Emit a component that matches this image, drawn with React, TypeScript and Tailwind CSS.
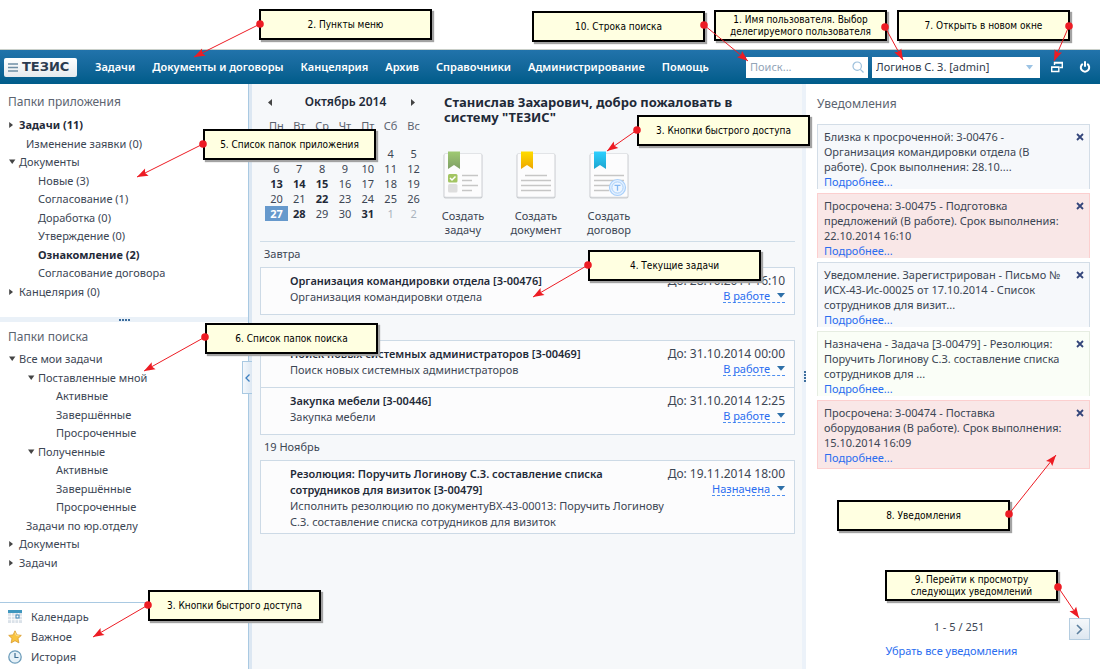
import type { ReactNode } from 'react';

/* ---------- folders ---------- */

type Folder = { label: string; pad: string; arrow?: 'open' | 'closed'; bold?: boolean };

const appFolders: Folder[] = [
  { label: 'Задачи (11)', pad: 'pl-[7px]', arrow: 'closed', bold: true },
  { label: 'Изменение заявки (0)', pad: 'pl-[26px]' },
  { label: 'Документы', pad: 'pl-[7px]', arrow: 'open' },
  { label: 'Новые (3)', pad: 'pl-[38px]' },
  { label: 'Согласование (1)', pad: 'pl-[38px]' },
  { label: 'Доработка (0)', pad: 'pl-[38px]' },
  { label: 'Утверждение (0)', pad: 'pl-[38px]' },
  { label: 'Ознакомление (2)', pad: 'pl-[38px]', bold: true },
  { label: 'Согласование договора', pad: 'pl-[38px]' },
  { label: 'Канцелярия (0)', pad: 'pl-[7px]', arrow: 'closed' },
];

const searchFolders: Folder[] = [
  { label: 'Все мои задачи', pad: 'pl-[7px]', arrow: 'open' },
  { label: 'Поставленные мной', pad: 'pl-[26px]', arrow: 'open' },
  { label: 'Активные', pad: 'pl-[56px]' },
  { label: 'Завершённые', pad: 'pl-[56px]' },
  { label: 'Просроченные', pad: 'pl-[56px]' },
  { label: 'Полученные', pad: 'pl-[26px]', arrow: 'open' },
  { label: 'Активные', pad: 'pl-[56px]' },
  { label: 'Завершённые', pad: 'pl-[56px]' },
  { label: 'Просроченные', pad: 'pl-[56px]' },
  { label: 'Задачи по юр.отделу', pad: 'pl-[26px]' },
  { label: 'Документы', pad: 'pl-[7px]', arrow: 'closed' },
  { label: 'Задачи', pad: 'pl-[7px]', arrow: 'closed' },
];

function TreeArrow({ state }: { state: 'open' | 'closed' }) {
  return (
    <svg className="w-3 h-2 shrink-0" viewBox="0 0 12 8" aria-hidden="true">
      {state === 'open' ? <path d="M2 1.5h6.4L5.2 6z" fill="#444" /> : <path d="M2.2 1v6L6 4z" fill="#444" />}
    </svg>
  );
}

function Tree({ folders, height }: { folders: Folder[]; height: string }) {
  return (
    <ul className={`flex flex-col ${height}`}>
      {folders.map((f, i) => (
        <li key={i} className={`flex flex-1 items-center ${f.pad}`}>
          {f.arrow && <TreeArrow state={f.arrow} />}
          <a href="#" className={f.bold ? 'font-bold text-[#1f2a38]' : ''}>{f.label}</a>
        </li>
      ))}
    </ul>
  );
}

function CalendarIcon() {
  return (
    <svg className="h-[14px] w-[14px]" viewBox="0 0 14 14" aria-hidden="true">
      <rect width="14" height="13" fill="#dbe2e9" />
      <rect width="14" height="3" fill="#3f97bf" />
      <path d="M0 6.3h14M0 9.7h14M3.5 3v10M7 3v10M10.500 3v10" stroke="#fff" strokeWidth=".8" />
      <rect x="8" y="5" width="3" height="3" fill="#fff" stroke="#3b84b5" />
    </svg>
  );
}

function StarIcon() {
  return (
    <svg className="h-[14px] w-[14px]" viewBox="0 0 14 14" aria-hidden="true">
      <path d="M7 .8l1.900 4.100 4.400.5-3.300 3 .9 4.500L7 10.700l-3.900 2.200.9-4.500-3.300-3 4.400-.5z" fill="#f9c440" stroke="#d99a2b" strokeWidth=".8" strokeLinejoin="round" />
      <path d="M7 2.500l1.300 3 3 .4" fill="none" stroke="#fde6a0" strokeWidth=".8" />
    </svg>
  );
}

function ClockIcon() {
  return (
    <svg className="h-[14px] w-[14px]" viewBox="0 0 14 14" aria-hidden="true">
      <circle cx="7" cy="7" r="6.200" fill="#e6f1f8" stroke="#6d9dbb" strokeWidth="1.300" />
      <path d="M7 3v4.500h3.500" fill="none" stroke="#3f6f93" strokeWidth="1.200" />
    </svg>
  );
}

const quickLinks: { label: string; icon: ReactNode }[] = [
  { label: 'Календарь', icon: <CalendarIcon /> },
  { label: 'Важное', icon: <StarIcon /> },
  { label: 'История', icon: <ClockIcon /> },
];

function Sidebar() {
  return (
    <aside className="flex w-[248px] shrink-0 flex-col bg-white">
      <section className="h-[233px] pt-1">
        <h2 className="flex h-7 items-center pl-2 text-[12px] text-[#5c6470]">Папки приложения</h2>
        <Tree folders={appFolders} height="h-[185px]" />
      </section>
      <div className="flex h-[5px] items-center justify-center gap-px bg-[#eaf1f8]">
        {[0, 1, 2, 3].map((i) => <span key={i} className="h-0.5 w-0.5 bg-[#3d6e9e]" />)}
      </div>
      <section className="flex-1">
        <h2 className="flex h-7 items-center pl-2 pt-0.5 text-[12px] text-[#5c6470]">Папки поиска</h2>
        <Tree folders={searchFolders} height="h-[222px]" />
      </section>
      <ul className="border-t border-[#a9c9e2] pt-1 pb-0.5">
        {quickLinks.map((q) => (
          <li key={q.label}>
            <a href="#" className="flex h-5 items-center gap-[9px] pl-2">
              {q.icon}
              {q.label}
            </a>
          </li>
        ))}
      </ul>
    </aside>
  );
}

/* ---------- header ---------- */

const menu = ['Задачи', 'Документы и договоры', 'Канцелярия', 'Архив', 'Справочники', 'Администрирование', 'Помощь'];

function Header() {
  return (
    <header className="flex h-[35px] items-center border-t border-[#c9cfc9] bg-linear-to-b from-[#2173ab] to-[#005c8a] pl-1 pr-[9px]">
      <a href="#" className="flex h-[19px] w-[73px] items-center gap-1 rounded-xs bg-linear-to-b from-white to-[#e6eaee] pl-1 font-['DejaVu_Sans',sans-serif] text-[13px] font-bold text-[#2b3a4f]">
        <svg className="h-[9px] w-[10px]" viewBox="0 0 10 9" aria-hidden="true">
          <path d="M0 1h10M0 4.500h10M0 8h10" stroke="#6f8ea5" strokeWidth="1.300" />
        </svg>
        ТЕЗИС
      </a>
      <nav className="ml-[18px] flex gap-[17px] text-[11px] font-semibold whitespace-nowrap text-white">
        {menu.map((m) => <a key={m} href="#">{m}</a>)}
      </nav>
      <div className="ml-auto flex items-center">
        <label className="flex h-[21px] w-[122px] items-center bg-white pr-1 pl-1">
          <input type="search" aria-label="Поиск" placeholder="Поиск..." className="w-0 min-w-0 flex-1 text-[11px] outline-none placeholder:text-[#93a5b8]" />
          <svg className="h-3 w-3" viewBox="0 0 12 12" fill="none" stroke="#9dc0dc" strokeWidth="1.200" aria-hidden="true">
            <circle cx="5.200" cy="5.200" r="4.200" />
            <path d="M8.300 8.300L11.500 11.500" />
          </svg>
        </label>
        <div className="relative ml-1 h-[21px] w-[168px]">
          <select aria-label="Пользователь" className="h-full w-full appearance-none bg-white pl-1 text-[11px] text-[#2f3b4c]">
            <option>Логинов С. З. [admin]</option>
          </select>
          <svg className="pointer-events-none absolute top-2 right-[7px] h-[5px] w-[7px]" viewBox="0 0 7 5" aria-hidden="true">
            <path d="M0 0h7L3.500 4.500z" fill="#9cc3e4" />
          </svg>
        </div>
        <button type="button" aria-label="Открыть в новом окне" className="ml-[11px]">
          <svg className="h-3 w-3" viewBox="0 0 12 12" fill="none" stroke="#fff" aria-hidden="true">
            <path d="M3.500 4V1.500h7.800v5H8.500M3 2h9" strokeWidth="1.400" />
            <path d="M.7 6h7.100v4.500H.7zM.2 6.400h8" strokeWidth="1.400" />
          </svg>
        </button>
        <button type="button" aria-label="Выход" className="ml-4">
          <svg className="h-3 w-3" viewBox="0 0 12 12" fill="none" stroke="#fff" strokeWidth="2" aria-hidden="true">
            <path d="M3.800 2.900a4.200 4.200 0 1 0 4.400 0M6 .3v5.500" />
          </svg>
        </button>
      </div>
    </header>
  );
}

/* ---------- calendar ---------- */

const weekdays = ['Пн', 'Вт', 'Ср', 'Чт', 'Пт', 'Сб', 'Вс'];
const weeks: (number | null)[][] = [
  [null, null, null, null, null, 4, 5],
  [6, 7, 8, 9, 10, 11, 12],
  [13, 14, 15, 16, 17, 18, 19],
  [20, 21, 22, 23, 24, 25, 26],
  [27, 28, 29, 30, 31, 1, 2],
];
const busyDays = [13, 14, 15, 22, 28, 31];

function dayClass(day: number | null, week: number) {
  if (day === null) return '';
  if (day === 27) return 'bg-[#6699cc] font-bold text-white';
  if (week === 4 && day < 7) return 'text-[#aab3bd]';
  return busyDays.includes(day) ? 'font-bold text-[#1f2a38]' : '';
}

function Calendar() {
  return (
    <section className="w-[160px] shrink-0">
      <div className="flex h-7 items-center pr-[10px] pl-[3px]">
        <button type="button" aria-label="Предыдущий месяц">
          <svg className="h-[7px] w-1" viewBox="0 0 4 7"><path d="M4 0v7L0 3.500z" fill="#444" /></svg>
        </button>
        <h2 className="flex-1 pl-2 text-center text-[12px] font-semibold text-[#1f2a38]">Октябрь 2014</h2>
        <button type="button" aria-label="Следующий месяц">
          <svg className="h-[7px] w-1" viewBox="0 0 4 7"><path d="M0 0v7L4 3.500z" fill="#444" /></svg>
        </button>
      </div>
      <table className="w-full table-fixed text-center text-[11px] leading-[15px]">
        <thead>
          <tr className="h-[30px] align-top">
            {weekdays.map((d) => <th key={d} scope="col" className="pt-0.5 font-normal text-[#5c6470]">{d}</th>)}
          </tr>
        </thead>
        <tbody>
          {weeks.map((w, i) => (
            <tr key={i} className="h-[15px]">
              {w.map((d, j) => <td key={j} className={dayClass(d, i)}>{d}</td>)}
            </tr>
          ))}
        </tbody>
      </table>
    </section>
  );
}

/* ---------- create buttons ---------- */

function DocIcon({ id, top, bottom, children }: { id: string; top: string; bottom: string; children: ReactNode }) {
  return (
    <svg className="h-12 w-10" viewBox="0 0 40 48" aria-hidden="true">
      <defs>
        <linearGradient id={id} x1="0" y1="0" x2="0" y2="1">
          <stop offset="0" stopColor={top} />
          <stop offset="1" stopColor={bottom} />
        </linearGradient>
      </defs>
      <rect x=".5" y="2.500" width="39" height="45" rx="2" fill="#c9ccd0" />
      <rect x="1.300" y="2.500" width="37.400" height="43.500" rx="1.500" fill="#fcfcfd" stroke="#dcdfe2" strokeWidth=".7" />
      <path d="M5 .5h12v17.500l-6-4-6 4z" fill={`url(#${id})`} />
      {children}
    </svg>
  );
}

const line = { stroke: '#c6c6c6', strokeWidth: 1.5, fill: 'none' };

const createActions: { verb: string; noun: string; icon: ReactNode }[] = [
  {
    verb: 'Создать',
    noun: 'задачу',
    icon: (
      <DocIcon id="ribbonGreen" top="#9fca72" bottom="#7f9f66">
        <rect x="5" y="23" width="9.500" height="8.500" rx="1.500" fill="#a3c563" />
        <path d="M7 27l2 2 3.500-3.500" fill="none" stroke="#fff" strokeWidth="1.500" />
        <rect x="5" y="33" width="9.500" height="8.500" rx="1.500" fill="#dedede" />
        <path d="M19 24.500h16M19 29.500h10M19 34.500h16M19 39.500h10" {...line} />
      </DocIcon>
    ),
  },
  {
    verb: 'Создать',
    noun: 'документ',
    icon: (
      <DocIcon id="ribbonYellow" top="#ffdc00" bottom="#eda600">
        <path d="M9 24.500h22M5 29.500h30M5 34.500h30M5 39.500h30" {...line} />
      </DocIcon>
    ),
  },
  {
    verb: 'Создать',
    noun: 'договор',
    icon: (
      <DocIcon id="ribbonBlue" top="#2fd0ff" bottom="#1ba4cf">
        <path d="M5 24.500h30M5 29.500h30M5 34.500h16M5 39.500h15" {...line} />
        <circle cx="28.500" cy="36.500" r="8" fill="#e3f0ff" stroke="#a9d0fb" strokeWidth="1.200" />
        <circle cx="28.500" cy="36.500" r="5.600" fill="#eef6ff" stroke="#a9d0fb" strokeWidth="1" />
        <path d="M25.500 34.300h6M28.500 34.300v5.500" stroke="#86b9f2" strokeWidth="1.300" />
      </DocIcon>
    ),
  },
];

/* ---------- tasks ---------- */

type Task = { title: string; text: string; due: string; status: string };

const tomorrow: Task[] = [
  { title: 'Организация командировки отдела [З-00476]', text: 'Организация командировки отдела', due: 'До: 28.10.2014 16:10', status: 'В работе' },
];
const october: Task[] = [
  { title: 'Поиск новых системных администраторов [З-00469]', text: 'Поиск новых системных администраторов', due: 'До: 31.10.2014 00:00', status: 'В работе' },
  { title: 'Закупка мебели [З-00446]', text: 'Закупка мебели', due: 'До: 31.10.2014 12:25', status: 'В работе' },
];
const november: Task[] = [
  {
    title: 'Резолюция: Поручить Логинову С.З. составление списка сотрудников для визиток [З-00479]',
    text: 'Исполнить резолюцию по документуВХ-43-00013: Поручить Логинову С.З. составление списка сотрудников для визиток',
    due: 'До: 19.11.2014 18:00',
    status: 'Назначена',
  },
];

function TaskList({ tasks }: { tasks: Task[] }) {
  return (
    <ul className="divide-y divide-[#cddae6] border border-[#cddae6] bg-[#fcfcfd]">
      {tasks.map((t) => (
        <li key={t.title} className="flex min-h-[46px] justify-between pt-[5px] pr-[9px] pb-[3px] pl-[29px] leading-4 not-last:min-h-[47px]">
          <div className="min-w-0 flex-1">
            <h3 className="max-w-[360px] font-semibold text-[#1f2a38]">{t.title}</h3>
            <p>{t.text}</p>
          </div>
          <div className="flex shrink-0 flex-col items-end">
            <span className="text-[12px]">{t.due}</span>
            <button type="button" className="flex h-[14px] items-center gap-[7px] border-b border-dashed border-[#4d8ef0] text-[11px] text-[#2a6df0]">
              {t.status}
              <svg className="h-[5px] w-2" viewBox="0 0 8 5" aria-hidden="true"><path d="M0 0h8L4 4.800z" fill="#2d6fa8" /></svg>
            </button>
          </div>
        </li>
      ))}
    </ul>
  );
}

function Workspace() {
  return (
    <main className="min-w-0 flex-1 bg-[#f6f8fa] pr-[7px] pl-2">
      <div className="flex h-[158px] border-b border-[#cfdde8] pt-1 pl-[5px]">
        <Calendar />
        <section className="ml-0.5 min-w-0 flex-1">
          <h1 className="max-w-[330px] pt-[7px] pl-[17px] text-[13px] leading-[15px] font-bold text-[#1f2a38]">
            Станислав Захарович, добро пожаловать в систему "ТЕЗИС"
          </h1>
          <div className="mt-[26px] flex gap-px">
            {createActions.map((a) => (
              <button key={a.noun} type="button" className="flex w-[72px] flex-col items-center gap-[10px] text-[11px] leading-[14px]">
                {a.icon}
                <span>{a.verb}<br />{a.noun}</span>
              </button>
            ))}
          </div>
        </section>
      </div>
      <h2 className="flex h-[25px] items-center pl-1">Завтра</h2>
      <TaskList tasks={tomorrow} />
      <div className="mt-[25px]">
        <TaskList tasks={october} />
      </div>
      <h2 className="flex h-[25px] items-center pl-1">19 Ноябрь</h2>
      <TaskList tasks={november} />
    </main>
  );
}

/* ---------- notifications ---------- */

type Notice = { text: string; look: string };

const plain = 'border-[#d3dde7] bg-[#f6f8fb]';
const overdue = 'border-[#fccfcf] bg-[#f9e7e7]';
const assigned = 'border-[#e6ede2] bg-[#fafef7]';

const notices: Notice[] = [
  { text: 'Близка к просроченной: З-00476 - Организация командировки отдела (В работе). Срок выполнения: 28.10....', look: plain },
  { text: 'Просрочена: З-00475 - Подготовка предложений (В работе). Срок выполнения: 22.10.2014 16:10', look: overdue },
  { text: 'Уведомление. Зарегистрирован - Письмо № ИСХ-43-Ис-00025 от 17.10.2014 - Список сотрудников для визит...', look: plain },
  { text: 'Назначена - Задача [З-00479] - Резолюция: Поручить Логинову С.З. составление списка сотрудников для ...', look: assigned },
  { text: 'Просрочена: З-00474 - Поставка оборудования (В работе). Срок выполнения: 15.10.2014 16:09', look: overdue },
];

function Notifications() {
  return (
    <aside className="flex w-[294px] shrink-0 flex-col bg-white pr-[10px] pl-[11px]">
      <h2 className="flex h-10 items-center text-[12px] text-[#5c6470]">Уведомления</h2>
      <ul className="flex flex-col gap-1">
        {notices.map((n) => (
          <li key={n.text} className={`flex justify-between border-x border-t pt-1 pr-[5px] pl-1.5 leading-[15px] last:border-b last:pb-[3px] ${n.look}`}>
            <div className="w-[240px]">
              <p>{n.text}</p>
              <a href="#" className="block text-[#2a6df0]">Подробнее...</a>
            </div>
            <button type="button" aria-label="Закрыть" className="mt-1 h-2">
              <svg className="h-2 w-2" viewBox="0 0 8 8" aria-hidden="true">
                <path d="M1 1l6 6M7 1L1 7" stroke="#33457a" strokeWidth="1.800" />
              </svg>
            </button>
          </li>
        ))}
      </ul>
      <div className="mt-auto flex h-[22px] items-center justify-end">
        <span className="flex-1 pb-1 pl-8 text-center">1 - 5 / 251</span>
        <button type="button" aria-label="Следующие уведомления" className="flex h-[22px] w-[21px] items-center justify-center border border-[#b5cde0] bg-linear-to-b from-[#f5f8fb] to-[#dde7f0]">
          <svg className="h-[11px] w-[7px]" viewBox="0 0 7 11" fill="none" aria-hidden="true">
            <path d="M1 1l4.500 4.500L1 10" stroke="#5b7f9e" strokeWidth="1.600" />
          </svg>
        </button>
      </div>
      <a href="#" className="mt-[3px] mb-[10px] flex h-4 items-center justify-center pr-1 text-[#2a6df0]">Убрать все уведомления</a>
    </aside>
  );
}

/* ---------- callouts pinned over the page ---------- */

type Callout = { text: string; place: string; from: [number, number]; to: [number, number] };

const callouts: Callout[] = [
  { text: '2. Пункты меню', place: 'left-[259px] top-[9px]', from: [260, 24], to: [194, 57] },
  { text: '10. Строка поиска', place: 'left-[532px] top-[11px]', from: [704, 25], to: [748, 61] },
  { text: '1. Имя пользователя. Выбор делегируемого пользователя', place: 'left-[714px] top-[10px]', from: [885, 27], to: [903, 60] },
  { text: '7. Открыть в новом окне', place: 'left-[897px] top-[10px]', from: [1069, 26], to: [1054, 61] },
  { text: '5. Список папок приложения', place: 'left-[203px] top-[129px]', from: [203, 144], to: [137, 177] },
  { text: '3. Кнопки быстрого доступа', place: 'left-[637px] top-[115px]', from: [637, 130], to: [607, 151] },
  { text: '4. Текущие задачи', place: 'left-[588px] top-[250px]', from: [588, 265], to: [533, 297] },
  { text: '6. Список папок поиска', place: 'left-[205px] top-[323px]', from: [205, 337], to: [144, 371] },
  { text: '8. Уведомления', place: 'left-[837px] top-[500px]', from: [1009, 514], to: [1056, 455] },
  { text: '9. Перейти к просмотру следующих уведомлений', place: 'left-[885px] top-[570px]', from: [1058, 587], to: [1079, 618] },
  { text: '3. Кнопки быстрого доступа', place: 'left-[148px] top-[590px]', from: [148, 605], to: [93, 637] },
];

function arrowHead([x1, y1]: [number, number], [x2, y2]: [number, number]) {
  const len = Math.hypot(x2 - x1, y2 - y1);
  const ux = (x2 - x1) / len;
  const uy = (y2 - y1) / len;
  const bx = x2 - ux * 11;
  const by = y2 - uy * 11;
  return `${x2},${y2} ${bx - uy * 4},${by + ux * 4} ${x2 - ux * 9},${y2 - uy * 9} ${bx + uy * 4},${by - ux * 4}`;
}

function Callouts() {
  return (
    <div className="pointer-events-none absolute inset-0 overflow-hidden">
      {callouts.map((c) => (
        <p key={c.place} className={`absolute flex h-[31px] w-[173px] items-center justify-center border-2 border-black bg-[#ffffe1] px-3 text-center font-['DejaVu_Sans_Condensed','DejaVu_Sans',sans-serif] text-[10px] leading-3 text-black shadow-[2px_2px_1px_#a3a3a3] ${c.place}`}>
          {c.text}
        </p>
      ))}
      <svg className="absolute inset-0 h-full w-full" aria-hidden="true">
        {callouts.map((c) => (
          <g key={c.place} fill="#ed1c24">
            <path d={`M${c.from[0]} ${c.from[1]}L${c.to[0]} ${c.to[1]}`} stroke="#ed1c24" />
            <circle cx={c.from[0]} cy={c.from[1]} r="3.800" />
            <polygon points={arrowHead(c.from, c.to)} />
          </g>
        ))}
      </svg>
    </div>
  );
}

export default function App() {
  return (
    <div className="relative flex min-h-screen flex-col bg-white pt-[49px] font-['Noto_Sans',sans-serif] text-[11px] text-[#3c4654]">
      <Header />
      <div className="flex flex-1">
        <Sidebar />
        <div className="relative w-1 shrink-0 border-l border-[#a9c9e2] bg-[#dce7f2]">
          <button type="button" aria-label="Свернуть панель" className="absolute top-[277px] right-0 flex h-[33px] w-[10px] items-center justify-center border border-r-0 border-[#a9c9e2] bg-linear-to-r from-[#f4f8fc] to-[#dce7f2]">
            <svg className="h-2 w-[5px]" viewBox="0 0 5 8" fill="none" aria-hidden="true">
              <path d="M4.500 .5L1 4l3.500 3.500" stroke="#3d7fc0" strokeWidth="1.300" />
            </svg>
          </button>
        </div>
        <Workspace />
        <div className="flex w-1 shrink-0 flex-col items-end justify-center gap-px bg-[#ecf2f9]">
          {[0, 1, 2, 3].map((i) => <span key={i} className="h-0.5 w-0.5 bg-[#3d6e9e]" />)}
        </div>
        <Notifications />
      </div>
      <Callouts />
    </div>
  );
}
